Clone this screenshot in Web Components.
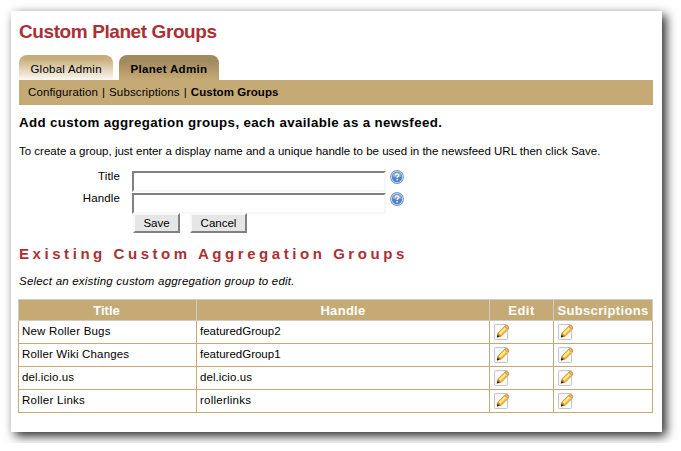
<!DOCTYPE html>
<html lang="en">
<head>
<meta charset="utf-8">
<title>Custom Planet Groups</title>
<style>
html,body{margin:0;background:#fff;overflow:hidden}
body{padding:11px;font:11.5px/14px "Liberation Sans",Arial,sans-serif;color:#000}
</style>
</head>
<body>
<planet-page></planet-page>
<script>
const define=(name,html,init)=>customElements.define(name,class extends HTMLElement{
  connectedCallback(){
    if(this.shadowRoot)return;
    const t=document.createElement('template');
    t.innerHTML=html;
    this.attachShadow({mode:'open'}).append(t.content.cloneNode(true));
    if(init)init(this,this.shadowRoot);
  }
});

define('admin-tab',`<style>
:host{display:block;box-sizing:border-box;height:25px;padding:7px 0 0 11.4px;border-radius:8px 8px 0 0;white-space:nowrap;letter-spacing:.25px;background:linear-gradient(#c6aa75 0,#c8ae7c 15%,#fbf8f3 100%)}
:host([active]){font-weight:bold;letter-spacing:.33px;background:linear-gradient(#a18a5f 0,#a18a5f 25%,#c6aa75 100%)}
</style><slot></slot>`);

define('tab-menu',`<style>
:host{display:flex;box-sizing:border-box;height:25px;padding:5px 0 0 9px;background:#c6aa75;white-space:nowrap;letter-spacing:.12px}
</style><slot></slot>`);

define('help-icon',`<style>:host{display:block;width:14px;height:14px}svg{display:block}</style>
<svg width="14" height="14" viewBox="0 0 14 14">
<circle cx="7" cy="7" r="6.9" fill="#7397c8"/><circle cx="7" cy="7" r="6" fill="#c9dcf2"/>
<circle cx="7" cy="7" r="5.2" fill="#5384c1"/><path d="M2.2 6.4a4.9 4.9 0 0 1 9.6 0Q7 8 2.2 6.4Z" fill="#86aedb"/>
<path d="M5.2 5.5C5.2 3.4 8.8 3.4 8.8 5.3 8.8 6.6 7.1 6.6 7.1 8" fill="none" stroke="#fff" stroke-width="1.3"/>
<rect x="6.4" y="9" width="1.4" height="1.4" fill="#fff"/></svg>`);

define('edit-icon',`<style>:host{display:block;width:16px;height:16px}svg{display:block}</style>
<svg width="16" height="16" viewBox="0 0 16 16">
<rect x=".5" y=".5" width="13" height="15" rx=".8" fill="#f8f8f9" stroke="#c3c5c8"/>
<path d="M3.2 13.2 3.8 9.1 10.8 2.1Q12.4.7 14 2 15.5 3.3 14.4 5.1L7.4 12.1Z" fill="#efb935" stroke="#c08a3c" stroke-width=".7"/>
<path d="M4.9 9.3 11.1 3.1 12.5 4.5 6.3 10.7Z" fill="#fff083"/>
<path d="M10.9 2.2Q12.5.8 14 2.1 15.3 3.4 14.3 5.1L13.4 6 10 3.1Z" fill="#d99a56"/>
<path d="M10.3 3.1 13.3 6" stroke="#f5dfb8" stroke-width=".9"/>
<path d="M12 2.2 13.8 3.8" stroke="#f0c796" stroke-width=".9"/>
<path d="M3.9 9.2 7.2 12.2 3 13.3Z" fill="#c58640"/>
<path d="M3.6 10.8 5.6 12.6 2.9 13.4Z" fill="#2b1b12"/></svg>`);

define('form-field',`<style>
:host{display:flex;height:22px}
label{width:101px;text-align:right;line-height:12px;letter-spacing:.12px}
input{box-sizing:border-box;width:254px;height:21px;margin:1px 4px 0 12px;padding:0 2px;border:2px solid;border-color:#808080 #f6f6f6 #f6f6f6 #808080;background:#fff;font:inherit;outline:0;border-radius:0}
</style><label><slot></slot></label><input type="text"><help-icon></help-icon>`);

define('push-button',`<style>
:host{display:block}
button{display:block;box-sizing:border-box;width:100%;height:20px;padding:0;border:2px solid;border-color:#f8f8f8 #808080 #808080 #f8f8f8;border-radius:0;background:#e6e6e6;color:#000;font:inherit;line-height:16px}
</style><button type="button"><slot></slot></button>`);

define('group-table',`<style>
:host{display:block;width:635px}
.row{display:grid;grid-template-columns:178px 293px 64px 100px;height:23px}
.row>*{box-sizing:border-box;border-left:1px solid #c6aa75;border-bottom:1px solid #c6aa75;padding:3px 0 0 3px;white-space:nowrap}
.row>:last-child{border-right:1px solid #c6aa75}
.row .i{padding:3px 0 0 4px}
.head{height:22px;background:#c6aa75;color:#fff;font-weight:bold;font-size:13px}
.head>*{border-color:#ccc!important;border-top:1px solid #ccc;text-align:center;padding:4px 0 0}
</style>
<div class="row head"><span style="padding-right:2px">Title</span><span style="letter-spacing:.3px">Handle</span><span style="letter-spacing:.5px">Edit</span><span style="letter-spacing:.35px">Subscriptions</span></div>
<div id="rows"></div>`,(el,root)=>{
  const rows=[['New Roller Bugs',.2,'featuredGroup2',0],['Roller Wiki Changes',.16,'featuredGroup1',0],['del.icio.us',.08,'del.icio.us',.08],['Roller Links',.25,'rollerlinks',.24]];
  root.getElementById('rows').innerHTML=rows.map(([t,a,h,b])=>`<div class="row"><span style="letter-spacing:${a}px">${t}</span><span style="letter-spacing:${b}px">${h}</span><span class="i"><edit-icon></edit-icon></span><span class="i"><edit-icon></edit-icon></span></div>`).join('');
});

define('planet-page',`<style>
:host{display:flex;flex-direction:column;box-sizing:border-box;width:651px;height:421px;padding:9px 9px 0 8px;background:#fff;box-shadow:4px 4px 10px rgba(0,0,0,.85)}
h1,h2,h3,p{margin:0;white-space:nowrap}
h1{font-size:19px;letter-spacing:-.41px;line-height:24px;height:35px;color:#ac2f34}
.tabs{display:flex;gap:6px}
.sep{margin:0 4px}
b{letter-spacing:.06px}
h2{font-size:13.3px;line-height:16px;letter-spacing:.38px;margin-top:10px}
.intro{margin-top:13px}
form{margin-top:12px}
.buttons{display:flex;gap:10px;margin:-1px 0 0 114px}
h3{font-size:15px;line-height:18px;letter-spacing:3.56px;color:#ac2f34;margin-top:12px}
.note{font-style:italic;letter-spacing:.21px;margin-top:11px}
group-table{margin:11px 0 0 -1px}
</style>
<h1>Custom Planet Groups</h1>
<nav class="tabs"><admin-tab style="width:94px">Global Admin</admin-tab><admin-tab active style="width:100px">Planet Admin</admin-tab></nav>
<tab-menu><span>Configuration</span><span class="sep">|</span><span>Subscriptions</span><span class="sep">|</span><b>Custom Groups</b></tab-menu>
<h2>Add custom aggregation groups, each available as a newsfeed.</h2>
<p class="intro">To create a group, just enter a display name and a unique handle to be used in the newsfeed URL then click Save.</p>
<form><form-field>Title</form-field><form-field>Handle</form-field>
<div class="buttons"><push-button style="width:47px">Save</push-button><push-button style="width:57px">Cancel</push-button></div></form>
<h3>Existing Custom Aggregation Groups</h3>
<p class="note">Select an existing custom aggregation group to edit.</p>
<group-table></group-table>`);
</script>
</body>
</html>
